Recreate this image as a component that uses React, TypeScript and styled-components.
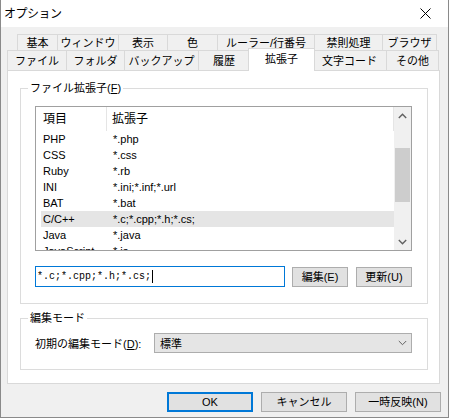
import React from "react";
import styled, { createGlobalStyle, css } from "styled-components";

const GlobalStyle = createGlobalStyle`
  html, body {
    margin: 0;
    padding: 0;
    background: #ffffff;
  }
  body {
    font-family: "Liberation Sans", "Noto Sans CJK JP", sans-serif;
    font-size: 11px;
    color: #000000;
  }
  * {
    box-sizing: border-box;
  }
`;

const tabsBack: [string, number][] = [
  ["基本", 41],
  ["ウィンドウ", 61],
  ["表示", 49],
  ["色", 50],
  ["ルーラー/行番号", 97],
  ["禁則処理", 68],
  ["ブラウザ", 54],
];

const tabsFront: [string, number][] = [
  ["ファイル", 60],
  ["フォルダ", 58],
  ["バックアップ", 74],
  ["履歴", 51],
  ["拡張子", 63],
  ["文字コード", 74],
  ["その他", 52],
];

const extensions = [
  { name: "PHP", ext: "*.php" },
  { name: "CSS", ext: "*.css" },
  { name: "Ruby", ext: "*.rb" },
  { name: "INI", ext: "*.ini;*.inf;*.url" },
  { name: "BAT", ext: "*.bat" },
  { name: "C/C++", ext: "*.c;*.cpp;*.h;*.cs;" },
  { name: "Java", ext: "*.java" },
  { name: "JavaScript", ext: "*.js" },
];

const selectedTab = "拡張子";
const selectedRow = "C/C++";

const App = () => {
  return (
    <>
      <GlobalStyle />
      <Window>
        <TitleBar>
          <Title>オプション</Title>
          <CloseButton>
            <svg width="11" height="11" viewBox="0 0 11 11">
              <path d="M0.5 0.5 L10.5 10.5 M10.5 0.5 L0.5 10.5" stroke="#000" strokeWidth="1" />
            </svg>
          </CloseButton>
        </TitleBar>
        <Body>
          <TabRow $back>
            {tabsBack.map(([label, w], i) => (
              <Tab key={label} $w={w} $first={i === 0} $back>
                {label}
              </Tab>
            ))}
          </TabRow>
          <TabRow>
            {tabsFront.map(([label, w], i) =>
              label === selectedTab ? (
                <ActiveTab key={label} $w={w}>
                  {label}
                </ActiveTab>
              ) : (
                <Tab key={label} $w={w} $first={i === 0}>
                  {label}
                </Tab>
              )
            )}
          </TabRow>
          <Panel>
            <GroupBox $top={17}>
              <GroupTitle>
                ファイル拡張子(<u>F</u>)
              </GroupTitle>
              <ListView>
                <ListBody>
                  <ListHeader>
                    <HeaderCell $first>項目</HeaderCell>
                    <HeaderCell>拡張子</HeaderCell>
                  </ListHeader>
                  {extensions.map((item) => (
                    <ListRow key={item.name} $selected={item.name === selectedRow}>
                      <Cell>{item.name}</Cell>
                      <Cell>{item.ext}</Cell>
                    </ListRow>
                  ))}
                </ListBody>
                <ScrollBar>
                  <ScrollArrow>
                    <svg width="9" height="6" viewBox="0 0 9 6">
                      <path d="M0.8 5 L4.5 1.3 L8.2 5" stroke="#606060" strokeWidth="1.4" fill="none" />
                    </svg>
                  </ScrollArrow>
                  <ScrollTrack>
                    <ScrollThumb style={{ marginTop: 24, height: 54 }} />
                  </ScrollTrack>
                  <ScrollArrow>
                    <svg width="9" height="6" viewBox="0 0 9 6">
                      <path d="M0.8 1 L4.5 4.7 L8.2 1" stroke="#606060" strokeWidth="1.4" fill="none" />
                    </svg>
                  </ScrollArrow>
                </ScrollBar>
              </ListView>
              <EditRow>
                <TextInput>
                  *.c;*.cpp;*.h;*.cs;
                  <Caret />
                </TextInput>
                <Button $w={56}>編集(E)</Button>
                <Button $w={56}>更新(U)</Button>
              </EditRow>
            </GroupBox>
            <GroupBox $top={14}>
              <GroupTitle>編集モード</GroupTitle>
              <ModeRow>
                <FieldLabel>
                  初期の編集モード(<u>D</u>):
                </FieldLabel>
                <Combo>
                  <span>標準</span>
                  <svg width="9" height="6" viewBox="0 0 9 6">
                    <path d="M0.8 1 L4.5 4.7 L8.2 1" stroke="#606060" strokeWidth="1" fill="none" />
                  </svg>
                </Combo>
              </ModeRow>
            </GroupBox>
          </Panel>
          <ButtonBar>
            <Button $w={86} $default>
              OK
            </Button>
            <Button $w={86}>キャンセル</Button>
            <Button $w={86}>一時反映(N)</Button>
          </ButtonBar>
        </Body>
      </Window>
    </>
  );
};

export default App;

const Window = styled.div`
  width: 449px;
  height: 418px;
  display: flex;
  flex-direction: column;
  background: #f0f0f0;
  border: 1px solid #8a8a8a;
  border-top: none;
`;

const TitleBar = styled.div`
  height: 27px;
  flex: none;
  display: flex;
  align-items: center;
  background: #ffffff;
  padding-left: 3px;
`;

const Title = styled.div`
  font-size: 12px;
  line-height: 16px;
  letter-spacing: -0.5px;
`;

const CloseButton = styled.div`
  margin-left: auto;
  width: 46px;
  height: 27px;
  display: flex;
  align-items: center;
  justify-content: center;
  padding-left: 1px;
`;

const Body = styled.div`
  flex: 1;
  display: flex;
  flex-direction: column;
  padding: 7px 8px 0 6px;
`;

const TabRow = styled.div<{ $back?: boolean }>`
  display: flex;
  height: ${({ $back }) => ($back ? 16 : 20)}px;
  ${({ $back }) =>
    $back &&
    css`
      margin-left: 10px;
    `}
`;

const Tab = styled.div<{ $w: number; $first?: boolean; $back?: boolean }>`
  width: ${({ $w }) => $w}px;
  flex: none;
  display: flex;
  align-items: center;
  justify-content: center;
  line-height: 14px;
  background: #f0f0f0;
  border-top: 1px solid #d9d9d9;
  border-right: 1px solid #d9d9d9;
  border-left: ${({ $first }) => ($first ? "1px solid #d9d9d9" : "none")};
  padding-top: ${({ $back }) => ($back ? 1 : 0)}px;
  white-space: nowrap;
`;

const ActiveTab = styled.div<{ $w: number }>`
  position: relative;
  z-index: 1;
  width: ${({ $w }) => $w + 4}px;
  height: 23px;
  flex: none;
  margin: -2px -2px -1px -2px;
  display: flex;
  align-items: center;
  justify-content: center;
  padding-bottom: 2px;
  line-height: 14px;
  background: #ffffff;
  border: 1px solid #d9d9d9;
  border-bottom: none;
  white-space: nowrap;
`;

const Panel = styled.div`
  height: 314px;
  flex: none;
  display: flex;
  flex-direction: column;
  background: #ffffff;
  border: 1px solid #d9d9d9;
  padding: 0 11px 0 12px;
`;

const GroupBox = styled.div<{ $top: number }>`
  display: flex;
  flex-direction: column;
  margin-top: ${({ $top }) => $top}px;
  border: 1px solid #dcdcdc;
  padding: 0 15px 16px 14px;
`;

const GroupTitle = styled.div`
  align-self: flex-start;
  height: 16px;
  line-height: 16px;
  margin: -9px 0 0 -7px;
  padding: 0 2px;
  background: #ffffff;
  white-space: nowrap;

  u {
    text-underline-offset: 1px;
  }
`;

const ListView = styled.div`
  margin-top: 10px;
  width: 377px;
  height: 145px;
  display: flex;
  border: 1px solid #a0a0a0;
  background: #ffffff;
`;

const ListBody = styled.div`
  flex: 1;
  display: flex;
  flex-direction: column;
  overflow: hidden;
`;

const ListHeader = styled.div`
  height: 24px;
  flex: none;
  display: grid;
  grid-template-columns: 71px 1fr;
  border-right: 1px solid #e5e5e5;
`;

const HeaderCell = styled.div<{ $first?: boolean }>`
  line-height: 24px;
  padding-left: ${({ $first }) => ($first ? 7 : 5)}px;
  border-right: ${({ $first }) => ($first ? "1px solid #e5e5e5" : "none")};
  font-size: 12px;
`;

const ListRow = styled.div<{ $selected?: boolean }>`
  height: 16px;
  flex: none;
  margin-left: 5px;
  display: grid;
  grid-template-columns: 70px 1fr;
  background: ${({ $selected }) => ($selected ? "#e5e5e5" : "transparent")};
`;

const Cell = styled.div`
  line-height: 16px;
  padding-left: 2px;
  white-space: nowrap;
`;

const ScrollBar = styled.div`
  width: 17px;
  flex: none;
  display: flex;
  flex-direction: column;
  background: #f0f0f0;
`;

const ScrollArrow = styled.div`
  height: 17px;
  flex: none;
  display: flex;
  align-items: center;
  justify-content: center;
`;

const ScrollTrack = styled.div`
  flex: 1;
  padding: 0 1px;
`;

const ScrollThumb = styled.div`
  background: #cdcdcd;
`;

const EditRow = styled.div`
  display: flex;
  align-items: flex-start;
  margin-top: 15px;
  gap: 8px;
`;

const TextInput = styled.div`
  width: 250px;
  height: 21px;
  display: flex;
  align-items: center;
  padding-left: 1px;
  border: 1px solid #0078d7;
  background: #ffffff;
  font-family: "Liberation Mono", "DejaVu Sans Mono", monospace;
  font-size: 10px;
  margin-right: -1px;
`;

const Caret = styled.span`
  display: inline-block;
  width: 1px;
  height: 13px;
  margin-left: 1px;
  background: #000000;
`;

const Button = styled.div<{ $w: number; $default?: boolean }>`
  width: ${({ $w }) => $w}px;
  height: 20px;
  flex: none;
  display: flex;
  align-items: center;
  justify-content: center;
  margin-top: 1px;
  background: #e1e1e1;
  border: ${({ $default }) => ($default ? "2px solid #0078d7" : "1px solid #adadad")};
  white-space: nowrap;
  line-height: 14px;
`;

const ModeRow = styled.div`
  display: flex;
  align-items: center;
  margin-top: 7px;
`;

const FieldLabel = styled.div`
  white-space: nowrap;

  u {
    text-underline-offset: 1px;
  }
`;

const Combo = styled.div`
  margin-left: auto;
  width: 258px;
  height: 20px;
  display: flex;
  align-items: center;
  justify-content: space-between;
  padding: 0 4px 0 5px;
  background: #e5e5e5;
  border: 1px solid #adadad;
`;

const ButtonBar = styled.div`
  display: flex;
  justify-content: flex-end;
  gap: 8px;
  margin: 7px -1px 0 0;
`;
